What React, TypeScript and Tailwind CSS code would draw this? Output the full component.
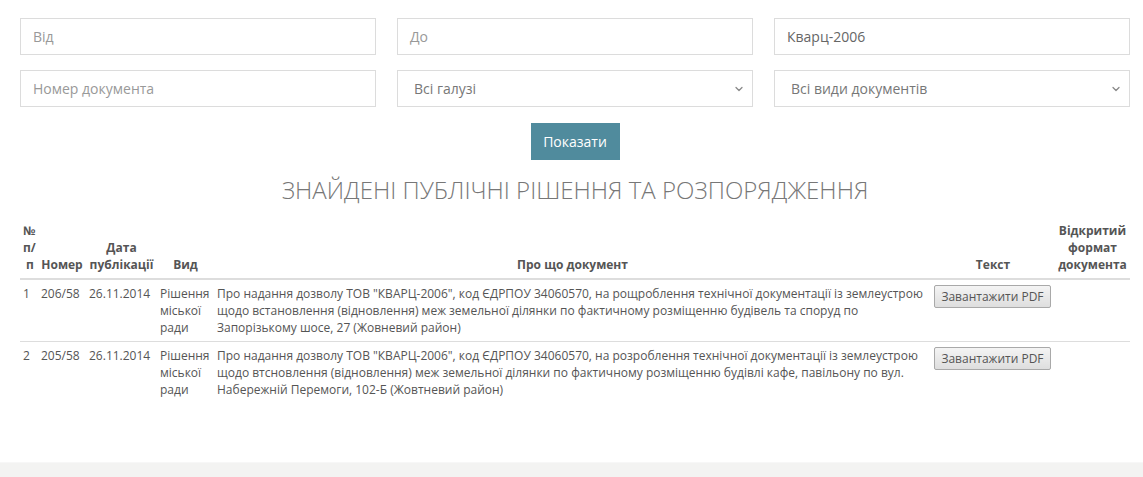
import { ChevronDown } from 'lucide-react';

const rows = [
  {
    n: '1',
    num: '206/58',
    date: '26.11.2014',
    text: 'Про надання дозволу ТОВ "КВАРЦ-2006", код ЄДРПОУ 34060570, на рощроблення технічної документації із землеустрою щодо встановлення (відновлення) меж земельної ділянки по фактичному розміщенню будівель та споруд по Запорізькому шосе, 27 (Жовневий район)',
  },
  {
    n: '2',
    num: '205/58',
    date: '26.11.2014',
    text: 'Про надання дозволу ТОВ "КВАРЦ-2006", код ЄДРПОУ 34060570, на розроблення технічної документації із землеустрою щодо втсновлення (відновлення) меж земельної ділянки по фактичному розміщенню будівлі кафе, павільону по вул. Набережній Перемоги, 102-Б (Жовтневий район)',
  },
];

function Field({ placeholder, value }: { placeholder: string; value?: string }) {
  return (
    <div className="h-[37px] border border-[#dcdcdc] bg-white flex items-center px-[12px] text-[14px]">
      <span className={value ? 'text-[#666]' : 'text-[#999]'}>{value ?? placeholder}</span>
    </div>
  );
}

function Select({ label }: { label: string }) {
  return (
    <div className="h-[37px] border border-[#dcdcdc] bg-white flex items-center justify-between pl-[16px] pr-[7px] text-[14px] text-[#777]">
      <span>{label}</span>
      <ChevronDown className="w-[12px] h-[12px] text-[#888]" strokeWidth={2.5} />
    </div>
  );
}

export default function App() {
  return (
    <div className="min-h-[477px] flex flex-col bg-white text-[#555]" style={{ fontFamily: '"Open Sans", sans-serif' }}>
      <div className="flex-1 pl-[20px] pr-[13px] pt-[18px]">
        {/* filters */}
        <div className="grid grid-cols-3 gap-x-[21px] gap-y-[15px]">
          <Field placeholder="Від" />
          <Field placeholder="До" />
          <Field placeholder="" value="Кварц-2006" />
          <Field placeholder="Номер документа" />
          <Select label="Всі галузі" />
          <Select label="Всі види документів" />
        </div>

        <div className="flex justify-center mt-[16px]">
          <button className="w-[89px] h-[37px] bg-[#508b9d] text-white text-[14px]">Показати</button>
        </div>

        <h1 className="text-center text-[24px] font-light text-[#777] mt-[13px] leading-[34px]">
          ЗНАЙДЕНІ ПУБЛІЧНІ РІШЕННЯ ТА РОЗПОРЯДЖЕННЯ
        </h1>

        {/* results */}
        <table className="w-[1110px] table-fixed mt-[15px] text-[12px] leading-[17px] border-collapse">
          <colgroup>
            <col className="w-[18px]" />
            <col className="w-[48px]" />
            <col className="w-[71px]" />
            <col className="w-[57px]" />
            <col className="w-[717px]" />
            <col className="w-[124px]" />
            <col className="w-[75px]" />
          </colgroup>
          <thead>
            <tr className="border-b-2 border-[#ddd] text-[#555]">
              <th className="align-bottom px-[3px] pb-[5px] text-left font-bold">
                №<br />п/<br />&nbsp;п
              </th>
              <th className="align-bottom px-[3px] pb-[5px] font-bold">Номер</th>
              <th className="align-bottom px-[3px] pb-[5px] font-bold">
                Дата
                <br />
                публікації
              </th>
              <th className="align-bottom px-[3px] pb-[5px] font-bold">Вид</th>
              <th className="align-bottom px-[3px] pb-[5px] font-bold">Про що документ</th>
              <th className="align-bottom px-[3px] pb-[5px] font-bold">Текст</th>
              <th className="align-bottom px-[3px] pb-[5px] font-bold">
                Відкритий
                <br />
                формат
                <br />
                документа
              </th>
            </tr>
          </thead>
          <tbody>
            {rows.map((r, i) => (
              <tr key={r.n} className={i === 0 ? 'border-b border-[#ddd] align-top' : 'align-top'}>
                <td className="px-[3px] pt-[5px] pb-[5px]">{r.n}</td>
                <td className="px-[3px] pt-[5px] pb-[5px]">{r.num}</td>
                <td className="px-[3px] pt-[5px] pb-[5px]">{r.date}</td>
                <td className="px-[3px] pt-[5px] pb-[5px]">
                  Рішення
                  <br />
                  міської
                  <br />
                  ради
                </td>
                <td className="px-[3px] pt-[5px] pb-[5px] pr-[2px]">{r.text}</td>
                <td className="px-[3px] pt-[5px] pb-[5px]">
                  <button className="w-[117px] h-[23px] border border-[#a9a9a9] rounded-[2px] bg-gradient-to-b from-[#f4f4f4] to-[#dedede] text-[12px] text-[#555]">
                    Завантажити PDF
                  </button>
                </td>
                <td className="px-[3px] pt-[5px] pb-[5px]"></td>
              </tr>
            ))}
          </tbody>
        </table>
      </div>
      <div className="h-[15px] bg-[#f3f3f2] border-t border-[#f7f7f7]" />
    </div>
  );
}
